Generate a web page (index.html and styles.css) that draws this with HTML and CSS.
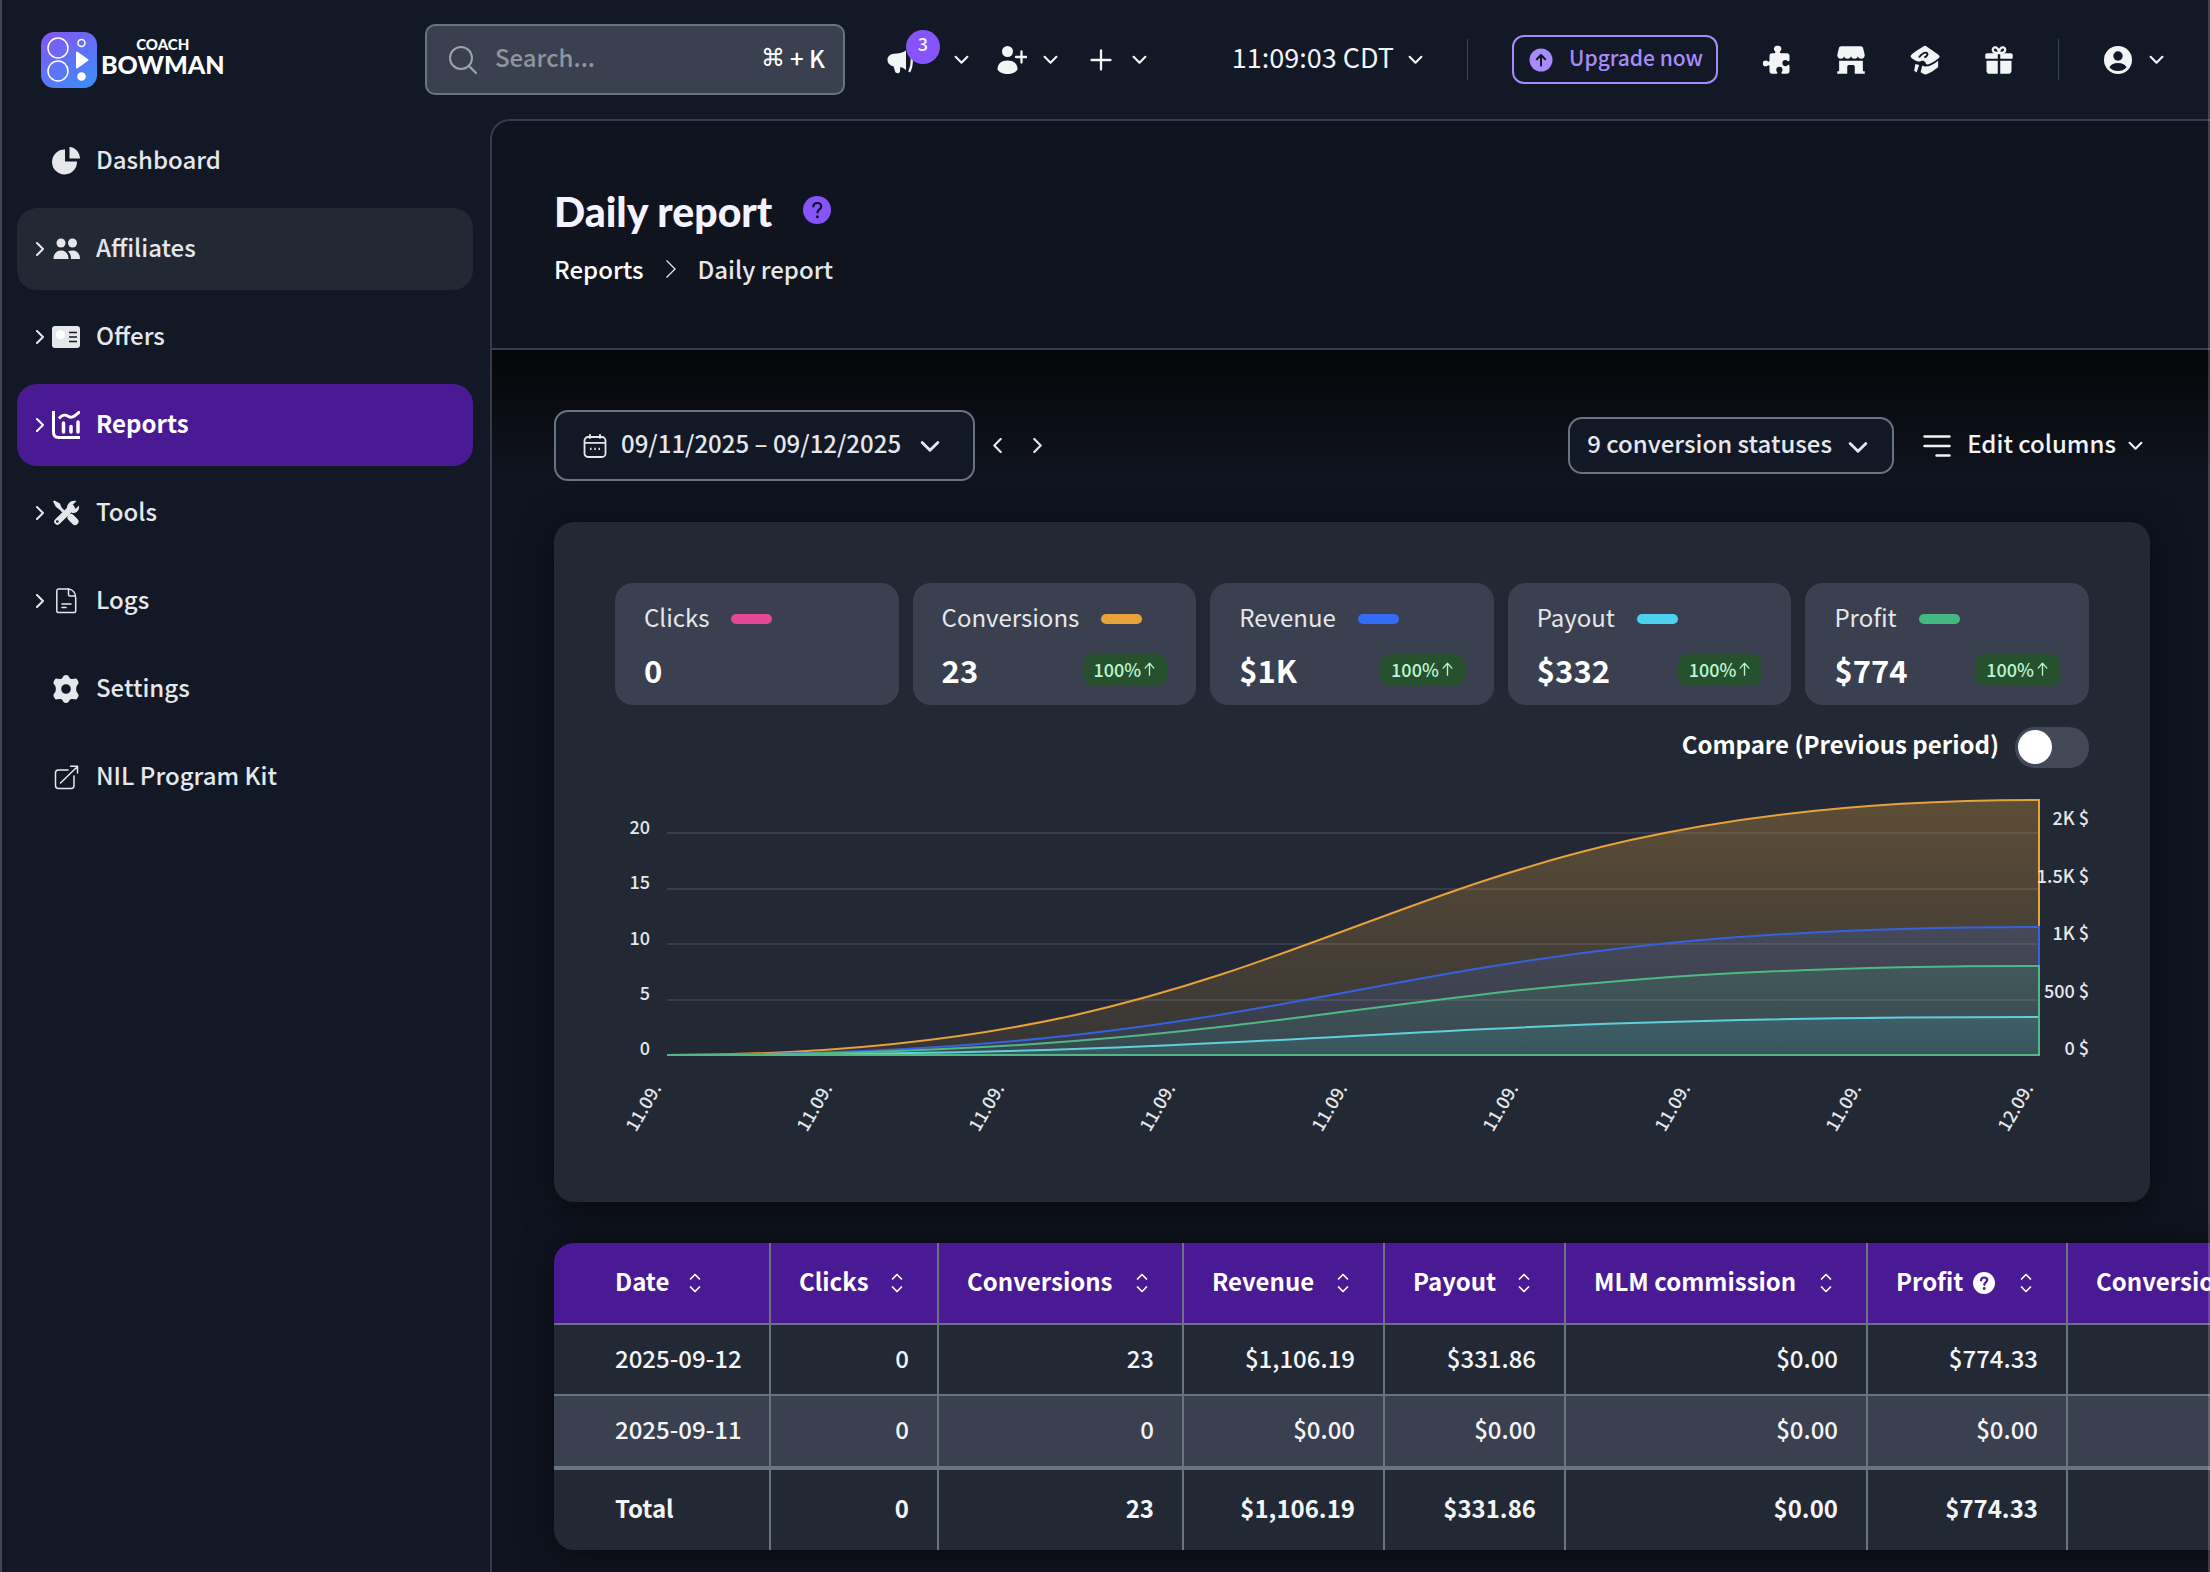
FILE: index.html
```html
<!DOCTYPE html>
<html lang="en">
<head>
<meta charset="UTF-8" />
<meta name="viewport" content="width=device-width, initial-scale=1.0" />
<title>Daily report</title>
<link rel="stylesheet" href="styles.css">
</head>
<body>

<!-- Shared icons -->
<svg class="sprite" aria-hidden="true">
  <symbol id="i-down" viewBox="0 0 14 14"><path d="M1.5 4.5 7 10l5.500-5.500" fill="none" stroke="currentColor" stroke-width="2" stroke-linecap="round" stroke-linejoin="round"/></symbol>
  <symbol id="i-right" viewBox="0 0 14 14"><path d="M4 1l6 6-6 6" fill="none" stroke="currentColor" stroke-width="2" stroke-linecap="round" stroke-linejoin="round"/></symbol>
  <symbol id="i-left" viewBox="0 0 14 14"><path d="M10 1 4 7l6 6" fill="none" stroke="currentColor" stroke-width="2" stroke-linecap="round" stroke-linejoin="round"/></symbol>
  <symbol id="i-sort" viewBox="0 0 24 24"><path d="M7.500 8 12 3.500 16.500 8M7.500 16l4.500 4.500 4.500-4.500" fill="none" stroke="currentColor" stroke-width="1.700" stroke-linecap="round" stroke-linejoin="round"/></symbol>
  <symbol id="i-up" viewBox="0 0 14 16"><path d="M7 15V2M2 7l5-5.500L12 7" fill="none" stroke="currentColor" stroke-width="1.500" stroke-linecap="round" stroke-linejoin="round"/></symbol>
</svg>

<header class="topbar">
  <a class="logo" href="#" aria-label="Coach Bowman">
    <svg class="logo-mark" viewBox="0 0 56 56" aria-hidden="true">
      <defs>
        <linearGradient id="logoFill" x1="0.2" y1="0" x2="0.8" y2="1">
          <stop offset="0" stop-color="#8058f5"/>
          <stop offset="1" stop-color="#3f8cf7"/>
        </linearGradient>
      </defs>
      <rect width="56" height="56" rx="13" fill="url(#logoFill)"/>
      <g fill="none" stroke="#fff" stroke-width="1.500">
        <circle cx="17" cy="16" r="10"/>
        <circle cx="17" cy="39" r="10"/>
        <circle cx="40.500" cy="11" r="3.500"/>
      </g>
      <path d="M36 20.500v15L46.500 28z" fill="#fff" stroke="#fff" stroke-width="2" stroke-linejoin="round"/>
      <circle cx="40.500" cy="44.500" r="4.300" fill="#fff"/>
    </svg>
    <span class="logo-text"><span class="logo-small">COACH</span><span class="logo-big">BOWMAN</span></span>
  </a>

  <label class="search">
    <svg class="icon" viewBox="0 0 28 28" aria-hidden="true"><circle cx="12" cy="12" r="11" fill="none" stroke="currentColor" stroke-width="2"/><path d="m20 20 7 7" stroke="currentColor" stroke-width="2.200" stroke-linecap="round"/></svg>
    <input type="text" placeholder="Search..." aria-label="Search" />
    <kbd><span class="cmd">⌘</span>+ K</kbd>
  </label>

  <div class="tools">
    <button class="tool notify" aria-label="News">
      <svg class="icon" viewBox="0 0 30 30" aria-hidden="true"><path d="M19 5.500C15.500 8 11.500 8.500 7 8.800c-4 .2-6.500 2.900-6.500 6 0 3.500 2.500 6 6 6.400l1.700 5.500c.6 2 4.600 2 4.800-.3l.3-4.300c2.500.6 4.200 1.500 5.700 3.200z" fill="currentColor"/><path d="M22.200 3c3.500 6.500 3.500 17.500 0 24" fill="none" stroke="currentColor" stroke-width="2.200"/></svg>
      <span class="badge">3</span>
      <svg class="chev"><use href="#i-down"/></svg>
    </button>
    <button class="tool" aria-label="Add user">
      <svg class="icon" viewBox="0 0 30 30" aria-hidden="true"><circle cx="10.500" cy="6.500" r="5.500" fill="currentColor"/><path d="M.5 24.500C.5 18.500 4.500 15.500 10.500 15.500s10 3 10 9c-2.500 3.500-6 4.500-10 4.500S3 28 .5 24.500z" fill="currentColor"/><path d="M24.500 6.500v11M19 12h10.500" stroke="currentColor" stroke-width="2.300" stroke-linecap="round"/></svg>
      <svg class="chev"><use href="#i-down"/></svg>
    </button>
    <button class="tool" aria-label="Create">
      <svg class="icon" viewBox="0 0 30 30" aria-hidden="true"><path d="M15 5.500v19M5.500 15h19" stroke="currentColor" stroke-width="2.300" stroke-linecap="round"/></svg>
      <svg class="chev"><use href="#i-down"/></svg>
    </button>
  </div>

  <div class="account">
    <button class="tool clock">11:09:03 CDT <svg class="chev"><use href="#i-down"/></svg></button>
    <span class="divider"></span>
    <button class="upgrade">
      <svg viewBox="0 0 24 24" aria-hidden="true"><circle cx="12" cy="12" r="11.500" fill="currentColor"/><path d="M12 17.500V7.500M7.800 11.300 12 7l4.200 4.300" fill="none" stroke="#121826" stroke-width="2" stroke-linecap="round" stroke-linejoin="round"/></svg>
      Upgrade now
    </button>
    <button class="tool" aria-label="Plugins">
      <svg class="icon" viewBox="0 0 24 24" aria-hidden="true"><path d="M10.700 5.800c0-.6-.5-.9-.8-1.400A2.500 2.500 0 0 1 12.500.6a2.500 2.500 0 0 1 2.600 3.800c-.3.500-.8.800-.8 1.400 0 .5.400.7.800.7h4.900c1.200 0 2 .8 2 2v3.700c0 .5-.3.800-.8.800-.6 0-1-1.100-2.400-1.100a2.500 2.500 0 0 0 0 5c1.400 0 1.800-1.100 2.400-1.100.5 0 .8.300.8.800V21c0 1.200-.8 2-2 2h-3.800c-.5 0-.7-.3-.7-.8 0-.6.900-1 .9-2.300a2.500 2.500 0 0 0-5 0c0 1.300.9 1.700.9 2.300 0 .5-.3.800-.8.800H8c-1.200 0-2-.8-2-2v-4c0-.5-.3-.9-.8-.9-.6 0-1 .9-2.200.9a2.200 2.200 0 0 1 0-4.600c1.200 0 1.600.9 2.200.9.500 0 .8-.4.800-.9V8.500c0-1.200.8-2 2-2h1.900c.5 0 .8-.2.800-.7z" fill="currentColor"/></svg>
    </button>
    <button class="tool" aria-label="Marketplace">
      <svg class="icon" viewBox="0 0 24 24" aria-hidden="true"><path d="M4.200 1h15.600c1 0 1.600.6 1.900 1.500L23 8c0 1.800-1.200 3-2.800 3s-2.700-1-2.700-2.200c0 1.200-1.200 2.200-2.700 2.200S12 10 12 8.800C12 10 10.700 11 9.200 11S6.500 10 6.500 8.800C6.500 10 5.400 11 3.800 11 2.200 11 1 9.800 1 8l1.300-5.500C2.600 1.600 3.200 1 4.200 1z" fill="currentColor"/><path d="M2.500 12.500h19V21H23v2h-8v-5.500c0-1-.8-1.500-1.500-1.500h-3c-.7 0-1.500.5-1.500 1.500V23H1v-2h1.500z" fill="currentColor"/></svg>
    </button>
    <button class="tool" aria-label="Academy">
      <svg class="icon" viewBox="0 0 24 24" aria-hidden="true"><path d="M12 .6c.8 0 10 6.500 11.300 7.800.5.500.5 1.200 0 1.800-1.500 1.500-7 5.300-9.200 5.300-1.600 0-1.500-2-2.800-2.600-1.800-.8-3.300.7-4.800.3C4.500 12.600 1 10.800.6 9.400c-.2-.8 0-1.200.6-1.700C3.200 5.800 11.200.6 12 .6z" fill="currentColor"/><path d="M7.500 9.500c2-2.300 4-4 5.800-3.200 1.600.8.200 2.700-1.300 3.400" fill="none" stroke="#121826" stroke-width="1.500" stroke-linecap="round"/><path d="M22.500 12.500v5c0 .8-8.500 6-10.200 6-.8 0-3.300-1.200-3.800-1.700l1.300-5.500c2.200 1.800 7.700.7 12.700-3.800zM4.300 15.200l3 .800-2 6-2-1.500z" fill="currentColor"/></svg>
    </button>
    <button class="tool" aria-label="Rewards">
      <svg class="icon" viewBox="0 0 24 24" aria-hidden="true"><path d="M11 12.500V23H4.500C3 23 2 22 2 20.500v-8zM13 12.500V23h6.500c1.500 0 2.500-1 2.500-2.500v-8zM2.500 6.500H11V11H2c-.6 0-1-.4-1-1V8c0-.8.600-1.500 1.500-1.500zM13 6.500h8.500c.9 0 1.500.7 1.500 1.500v2c0 .6-.4 1-1 1h-9z" fill="currentColor"/><path d="M12 6.500C10 6.500 7 6 7 3.800 7 1 11.500.8 12 6.500zM12 6.500c2 0 5-.5 5-2.700C17 1 12.500.8 12 6.500z" fill="none" stroke="currentColor" stroke-width="1.800"/></svg>
    </button>
    <span class="divider"></span>
    <button class="tool" aria-label="Account">
      <svg class="icon" viewBox="0 0 30 30" aria-hidden="true"><circle cx="15" cy="15" r="14" fill="currentColor"/><circle cx="15" cy="11" r="4.700" fill="#121826"/><path d="M6.500 22.500c1-3 4-4.500 8.500-4.500s7.500 1.500 8.500 4.500A12 12 0 0 1 15 26a12 12 0 0 1-8.500-3.500z" fill="#121826"/></svg>
      <svg class="chev"><use href="#i-down"/></svg>
    </button>
  </div>
</header>

<div class="layout">
  <nav class="sidebar">
    <a class="nav-item" href="#">
      <span class="arrow"></span>
      <svg class="nav-icon" viewBox="0 0 28 28" aria-hidden="true"><path d="M13 3v12h12A12.500 12.500 0 1 1 13 3z" fill="currentColor" transform="translate(0 -.5)"/><path d="M17.500 0C23.500.5 27.500 5 28 11.500H17.500z" fill="currentColor"/></svg>
      Dashboard
    </a>
    <a class="nav-item hover" href="#">
      <svg class="arrow"><use href="#i-right"/></svg>
      <svg class="nav-icon" viewBox="0 0 28 28" aria-hidden="true"><g fill="currentColor"><circle cx="9" cy="8" r="4.500"/><circle cx="20.500" cy="8" r="4.500"/><path d="M1.500 24c0-5.500 3-8.500 7.500-8.500s7.500 3 7.500 8.500zM16 16.500c1.200-.7 2.700-1 4.500-1 4.500 0 7.500 3 7.500 8.500h-9c.2-3-.8-5.800-3-7.500z"/></g></svg>
      Affiliates
    </a>
    <a class="nav-item" href="#">
      <svg class="arrow"><use href="#i-right"/></svg>
      <svg class="nav-icon" viewBox="0 0 28 28" aria-hidden="true"><rect y="3" width="28" height="22" rx="3" fill="currentColor"/><circle cx="8.500" cy="11.500" r="4.500" fill="#fff"/><path d="M17 9.500h8M17 14h8M17 18.500h8" stroke="#121826" stroke-width="1.500"/></svg>
      Offers
    </a>
    <a class="nav-item active" href="#">
      <svg class="arrow"><use href="#i-right"/></svg>
      <svg class="nav-icon" viewBox="0 0 28 28" aria-hidden="true"><path d="M1.500 0v21c0 3.500 1.500 5.500 5 5.500H28M7 7.500c4-5 7-3.500 9.500-2s5 1 11.500-5" fill="none" stroke="currentColor" stroke-width="3"/><path d="M11.500 12v9M19 15.500V21M26 11v10" fill="none" stroke="currentColor" stroke-width="3.500" stroke-linecap="round"/></svg>
      Reports
    </a>
    <a class="nav-item" href="#">
      <svg class="arrow"><use href="#i-right"/></svg>
      <svg class="nav-icon" viewBox="0 0 28 28" aria-hidden="true"><g fill="none" stroke="currentColor" stroke-linecap="round"><path d="M5.500 22.500 19.500 9" stroke-width="6.500"/><path d="m19 18.500 4 4" stroke-width="7"/><path d="M5 6l6 6" stroke-width="3"/></g><path d="M1 2.500 2.500 1.500 8 4.500l1.500 4L7 10 4 8zM24.500 2 20 6.500l1.500 2.500 2.500.500L27 6.500c.600 3.500-1.500 8-6.500 7.500L15 9.500C14.500 5 19 .5 24.500 2z" fill="currentColor"/><circle cx="5.300" cy="22.500" r="1.300" fill="#121826"/></svg>
      Tools
    </a>
    <a class="nav-item" href="#">
      <svg class="arrow"><use href="#i-right"/></svg>
      <svg class="nav-icon" viewBox="0 0 28 28" aria-hidden="true"><g fill="none" stroke="currentColor" stroke-width="1.500" stroke-linejoin="round" stroke-linecap="round"><path d="M16.500 2H6.500A1.800 1.800 0 0 0 4.800 4v20a1.500 1.500 0 0 0 1.700 1.500h15.500a1.500 1.500 0 0 0 1.700-1.500V11c0-5-3-8.500-7.200-9z"/><path d="M16.500 2v5.500c0 1 .5 1.500 1.500 1.500h5M10 17h9M10 20.500h4"/></g></svg>
      Logs
    </a>
    <a class="nav-item" href="#">
      <span class="arrow"></span>
      <svg class="nav-icon" viewBox="0 0 28 28" aria-hidden="true"><path fill="currentColor" fill-rule="evenodd" d="M14 0c1.500 0 2.600.8 3.200 2.200.5 1.300 1.500 1.800 3.300 1.800l3.500-.5c1 .3 2.500 2.800 2.600 4.300-.1 1.300-1.400 2-1.900 3.200-.7 1.800-.7 4.200 0 6 .5 1.200 1.800 1.900 1.900 3.200-.1 1.500-1.600 4-2.600 4.300l-3.500-.5c-1.800 0-2.800.5-3.300 1.800C16.600 27.200 15.500 28 14 28s-2.600-.8-3.200-2.200C10.300 24.500 9.300 24 7.500 24L4 24.500c-1-.3-2.500-2.800-2.600-4.300.1-1.300 1.400-2 1.900-3.200.7-1.800.7-4.200 0-6-.5-1.200-1.800-1.900-1.900-3.200C1.500 6.300 3 3.800 4 3.500L7.500 4c1.800 0 2.800-.5 3.300-1.800C11.400.8 12.500 0 14 0zM14 9.200a4.800 4.800 0 1 0 0 9.600 4.800 4.800 0 0 0 0-9.600z"/></svg>
      Settings
    </a>
    <a class="nav-item" href="#">
      <span class="arrow"></span>
      <svg class="nav-icon" viewBox="0 0 28 28" aria-hidden="true"><path d="M16 7H6.500A3 3 0 0 0 3.500 10v12.500a3 3 0 0 0 3 3H19a3 3 0 0 0 3-3V13M8.500 20 25.500 3.500M18.500 3.300h7V10" fill="none" stroke="currentColor" stroke-width="1.500" stroke-linecap="round" stroke-linejoin="round"/></svg>
      NIL Program Kit
    </a>
  </nav>

  <main class="main">
    <div class="page-head">
      <div class="title-row">
        <h1>Daily report</h1>
        <svg class="help" viewBox="0 0 28 28" aria-hidden="true"><circle cx="14" cy="14" r="14" fill="#8754fb"/><path d="M10.300 10.500C10.500 8 12 7 14.200 7c2.300 0 4 1.400 4 3.400 0 2.800-3.700 3-3.700 6" fill="none" stroke="#10141f" stroke-width="2.200" stroke-linecap="round"/><circle cx="14.400" cy="20.800" r="1.500" fill="#10141f"/></svg>
      </div>
      <div class="crumbs">
        <a href="#">Reports</a>
        <svg viewBox="0 0 20 20" aria-hidden="true"><path d="M5.500 1.500 14 10l-8.500 8.500" fill="none" stroke="currentColor" stroke-width="1.300"/></svg>
        <span>Daily report</span>
      </div>
    </div>

    <div class="content">
      <div class="filters">
        <button class="date-picker">
          <svg class="cal" viewBox="0 0 24 24" aria-hidden="true"><rect x="1.500" y="3" width="21" height="20" rx="3.500" fill="none" stroke="currentColor" stroke-width="1.800"/><path d="M2 8.800h20M7 .8V4M17 .8V4" stroke="currentColor" stroke-width="1.800" stroke-linecap="round"/><path d="M7 14.800h1.500M11.300 14.800h1.500M15.500 14.800H17" stroke="currentColor" stroke-width="2.200"/></svg>
          09/11/2025 – 09/12/2025
          <svg class="chev-lg"><use href="#i-down"/></svg>
        </button>
        <button class="step" aria-label="Previous"><svg><use href="#i-left"/></svg></button>
        <button class="step" aria-label="Next"><svg><use href="#i-right"/></svg></button>
        <div class="status-select">
          <select aria-label="Conversion statuses"><option>9 conversion statuses</option></select>
          <svg class="chev-lg"><use href="#i-down"/></svg>
        </div>
        <button class="edit-columns">
          <svg class="lines" viewBox="0 0 28 24" aria-hidden="true"><path d="M1.500 2.500h25M1.500 12h25M13.500 21.500h13" stroke="currentColor" stroke-width="2.500" stroke-linecap="round"/></svg>
          Edit columns
          <svg class="chev"><use href="#i-down"/></svg>
        </button>
      </div>

      <section class="card">
        <div class="stats">
          <div class="stat">
            <div class="stat-label">Clicks <span class="pill pink"></span></div>
            <div class="stat-row"><strong>0</strong></div>
          </div>
          <div class="stat">
            <div class="stat-label">Conversions <span class="pill orange"></span></div>
            <div class="stat-row"><strong>23</strong><span class="trend">100%<svg><use href="#i-up"/></svg></span></div>
          </div>
          <div class="stat">
            <div class="stat-label">Revenue <span class="pill blue"></span></div>
            <div class="stat-row"><strong>$1K</strong><span class="trend">100%<svg><use href="#i-up"/></svg></span></div>
          </div>
          <div class="stat">
            <div class="stat-label">Payout <span class="pill cyan"></span></div>
            <div class="stat-row"><strong>$332</strong><span class="trend">100%<svg><use href="#i-up"/></svg></span></div>
          </div>
          <div class="stat">
            <div class="stat-label">Profit <span class="pill green"></span></div>
            <div class="stat-row"><strong>$774</strong><span class="trend">100%<svg><use href="#i-up"/></svg></span></div>
          </div>
        </div>

        <div class="compare">
          <label for="compare">Compare (Previous period)</label>
          <input type="checkbox" class="toggle" id="compare" />
        </div>

        <svg class="chart" viewBox="0 0 1474 362" role="img" aria-label="Daily chart">
          <defs>
            <linearGradient id="gOrange" gradientUnits="userSpaceOnUse" x1="0" y1="20" x2="0" y2="275"><stop offset="0" stop-color="#e8a23a" stop-opacity=".3"/><stop offset="1" stop-color="#e8a23a" stop-opacity=".1"/></linearGradient>
            <linearGradient id="gBlue" gradientUnits="userSpaceOnUse" x1="0" y1="20" x2="0" y2="275"><stop offset="0" stop-color="#336df5" stop-opacity=".25"/><stop offset="1" stop-color="#336df5" stop-opacity=".1"/></linearGradient>
            <linearGradient id="gCyan" gradientUnits="userSpaceOnUse" x1="0" y1="20" x2="0" y2="275"><stop offset="0" stop-color="#4cd2ee" stop-opacity=".3"/><stop offset="1" stop-color="#4cd2ee" stop-opacity=".1"/></linearGradient>
            <linearGradient id="gGreen" gradientUnits="userSpaceOnUse" x1="0" y1="20" x2="0" y2="275"><stop offset="0" stop-color="#45b882" stop-opacity=".3"/><stop offset="1" stop-color="#45b882" stop-opacity=".1"/></linearGradient>
          </defs>
          <g class="grid">
            <path d="M52 53H1424M52 109H1424M52 164H1424M52 220H1424M52 275H1424"/>
          </g>
          <g class="series">
            <path fill="url(#gOrange)" stroke="#e8a23a" d="M52 275C738 275 738 20 1424 20V275Z"/>
            <path fill="url(#gBlue)" stroke="#3562e0" d="M52 275C738 275 738 147 1424 147V275Z"/>
            <path fill="url(#gCyan)" stroke="#63d3e6" d="M52 275C738 275 738 237 1424 237V275Z"/>
            <path fill="url(#gGreen)" stroke="#4fb884" d="M52 275C738 275 738 186 1424 186V275Z"/>
          </g>
          <g class="axis">
            <text x="35" y="54">20</text>
            <text x="35" y="109">15</text>
            <text x="35" y="165">10</text>
            <text x="35" y="220">5</text>
            <text x="35" y="275">0</text>
            <text x="1474" y="45">2K $</text>
            <text x="1474" y="103">1.5K $</text>
            <text x="1474" y="160">1K $</text>
            <text x="1474" y="218">500 $</text>
            <text x="1474" y="275">0 $</text>
          </g>
          <g class="axis">
            <text transform="translate(47 308) rotate(-60)">11.09.</text>
            <text transform="translate(218 308) rotate(-60)">11.09.</text>
            <text transform="translate(390 308) rotate(-60)">11.09.</text>
            <text transform="translate(561 308) rotate(-60)">11.09.</text>
            <text transform="translate(733 308) rotate(-60)">11.09.</text>
            <text transform="translate(904 308) rotate(-60)">11.09.</text>
            <text transform="translate(1076 308) rotate(-60)">11.09.</text>
            <text transform="translate(1247 308) rotate(-60)">11.09.</text>
            <text transform="translate(1419 308) rotate(-60)">12.09.</text>
          </g>
        </svg>
      </section>

      <table class="report">
        <thead>
          <tr>
            <th class="c-date"><span>Date <svg><use href="#i-sort"/></svg></span></th>
            <th class="c-clicks"><span>Clicks <svg><use href="#i-sort"/></svg></span></th>
            <th class="c-conv"><span>Conversions <svg><use href="#i-sort"/></svg></span></th>
            <th class="c-rev"><span>Revenue <svg><use href="#i-sort"/></svg></span></th>
            <th class="c-pay"><span>Payout <svg><use href="#i-sort"/></svg></span></th>
            <th class="c-mlm"><span>MLM commission <svg><use href="#i-sort"/></svg></span></th>
            <th class="c-profit"><span><span class="with-help">Profit <svg viewBox="0 0 22 22" aria-hidden="true"><circle cx="11" cy="11" r="11" fill="#fff"/><path d="M8 8.300C8.200 6.500 9.400 5.500 11.100 5.500c1.800 0 3.100 1 3.100 2.600 0 2.200-2.900 2.400-2.900 4.700" fill="none" stroke="#491a94" stroke-width="2.200" stroke-linecap="round"/><circle cx="11.200" cy="16.500" r="1.400" fill="#491a94"/></svg></span> <svg><use href="#i-sort"/></svg></span></th>
            <th class="c-rate"><span>Conversion rate <svg><use href="#i-sort"/></svg></span></th>
          </tr>
        </thead>
        <tbody>
          <tr><td>2025-09-12</td><td>0</td><td>23</td><td>$1,106.19</td><td>$331.86</td><td>$0.00</td><td>$774.33</td><td></td></tr>
          <tr><td>2025-09-11</td><td>0</td><td>0</td><td>$0.00</td><td>$0.00</td><td>$0.00</td><td>$0.00</td><td></td></tr>
        </tbody>
        <tfoot>
          <tr><td>Total</td><td>0</td><td>23</td><td>$1,106.19</td><td>$331.86</td><td>$0.00</td><td>$774.33</td><td></td></tr>
        </tfoot>
      </table>
    </div>
  </main>
</div>

</body>
</html>
```

FILE: styles.css
```css
* {
  box-sizing: border-box;
}
body {
  margin: 0;
  min-height: 100vh;
  display: flex;
  flex-direction: column;
  overflow: hidden;
  background: #121826;
  color: #e5e7eb;
  font-family: "Noto Sans CJK SC", "Noto Sans", sans-serif;
  font-size: 24px;
  font-weight: 500;
  line-height: 36px;
}
/* thin window frame on both sides */
body::after {
  content: "";
  position: fixed;
  inset: 0;
  border: solid rgba(255, 255, 255, 0.2);
  border-width: 0 2px;
  pointer-events: none;
}
a {
  color: inherit;
  text-decoration: none;
}
button, input, select {
  font: inherit;
  color: inherit;
}
button {
  display: flex;
  align-items: center;
  padding: 0;
  border: none;
  background: none;
  white-space: nowrap;
  cursor: pointer;
}
svg {
  display: block;
  flex-shrink: 0;
}
.sprite {
  position: absolute;
  width: 0;
  height: 0;
}

/* top bar */
.topbar {
  display: flex;
  align-items: center;
  height: 119px;
  padding: 0 46px 0 41px;
  color: #f3f4f6;
}
.logo {
  display: flex;
  align-items: center;
  gap: 4px;
  width: 384px;
}
.logo-mark {
  width: 56px;
  height: 56px;
}
.logo-text {
  display: flex;
  flex-direction: column;
  align-items: center;
  padding-bottom: 6px;
  color: #fff;
  font-family: Lato, sans-serif;
  font-weight: 900;
}
.logo-small {
  font-size: 15px;
  line-height: 15px;
}
.logo-big {
  font-size: 25px;
  line-height: 24px;
}
.search {
  display: flex;
  align-items: center;
  gap: 18px;
  width: 420px;
  height: 71px;
  padding: 0 18px 0 22px;
  border: 2px solid #6b7280;
  border-radius: 10px;
  background: #3b4050;
  color: #9ca3af;
}
.search svg {
  width: 28px;
  height: 28px;
}
.search input {
  flex: 1;
  min-width: 0;
  padding: 0 0 6px;
  border: none;
  outline: none;
  background: none;
}
.search input::placeholder {
  color: #8f959e;
}
.search kbd {
  display: flex;
  align-items: center;
  gap: 5px;
  padding-bottom: 4px;
  font: inherit;
  color: #fff;
}
.cmd {
  font-family: "DejaVu Sans", sans-serif;
}
.tools {
  display: flex;
  gap: 28px;
  margin-left: 42px;
}
.tool {
  position: relative;
  gap: 16px;
}
.icon {
  width: 30px;
  height: 30px;
}
.chev {
  width: 15px;
  height: 15px;
}
.notify {
  gap: 37px;
}
.badge {
  position: absolute;
  left: 19px;
  top: -15px;
  width: 34px;
  height: 34px;
  border-radius: 50%;
  background: #8754fb;
  font-size: 18px;
  line-height: 26px;
  text-align: center;
}
.account {
  display: flex;
  align-items: center;
  gap: 44px;
  margin-left: auto;
}
.clock {
  gap: 14px;
  padding-bottom: 6px;
  font-size: 27px;
  font-weight: 400;
}
.clock svg {
  margin-top: 6px;
}
.divider {
  width: 1px;
  height: 41px;
  background: #374151;
}
.upgrade {
  gap: 16px;
  height: 49px;
  padding: 0 13px 6px 15px;
  border: 2px solid #a78bfa;
  border-radius: 12px;
  color: #a78bfa;
  font-size: 21px;
}
.upgrade svg {
  width: 24px;
  height: 24px;
  margin-top: 6px;
}

/* sidebar */
.layout {
  display: flex;
  flex: 1;
}
.sidebar {
  display: flex;
  flex-direction: column;
  gap: 6px;
  width: 490px;
  padding: 1px 17px 0;
  flex-shrink: 0;
}
.nav-item {
  display: flex;
  align-items: center;
  height: 82px;
  padding: 0 16px 4px;
  border-radius: 20px;
}
.nav-item svg {
  margin-top: 4px;
}
.nav-item .arrow {
  width: 14px;
  height: 14px;
  margin-right: 5px;
}
.nav-icon {
  width: 28px;
  height: 28px;
  margin-right: 16px;
}
.nav-item.hover {
  background: #222935;
}
.nav-item.active {
  background: #491a94;
  color: #fff;
  font-weight: 700;
}

/* main panel */
.main {
  flex: 1;
  min-width: 0;
  overflow: hidden;
  border: solid #363c4b;
  border-width: 2px 0 0 2px;
  border-top-left-radius: 20px;
  background: #10141f;
}
.page-head {
  padding: 68px 62px 61px;
  border-bottom: 2px solid #363c4b;
}
.title-row {
  display: flex;
  align-items: center;
  gap: 31px;
}
h1 {
  margin: 0;
  color: #f5f3ff;
  font-family: Lato, sans-serif;
  font-size: 41px;
  font-weight: 900;
  line-height: 46px;
}
.help {
  width: 28px;
  height: 28px;
  margin-bottom: 4px;
}
.crumbs {
  display: flex;
  align-items: center;
  gap: 17px;
  margin-top: 16px;
}
.crumbs a {
  color: #fff;
}
.crumbs svg {
  width: 20px;
  height: 20px;
}
.content {
  padding: 60px 60px 22px 62px;
  background: linear-gradient(#050608, #10141f 130px);
}
.filters {
  display: flex;
  align-items: center;
  margin-bottom: 41px;
}
.date-picker {
  gap: 14px;
  height: 71px;
  margin-right: 10px;
  padding: 0 33px 6px 27px;
  border: 2px solid #6b7280;
  border-radius: 14px;
  background: #121826;
}
.date-picker svg {
  margin-top: 6px;
}
.cal {
  width: 24px;
  height: 24px;
}
.chev-lg {
  width: 20px;
  height: 20px;
}
.date-picker .chev-lg {
  margin-left: 5px;
}
.step {
  padding: 0 5px;
}
.step + .step {
  margin-left: 15px;
}
.step svg {
  width: 15px;
  height: 15px;
}
.status-select {
  position: relative;
  margin-left: auto;
}
.status-select select {
  appearance: none;
  height: 57px;
  padding: 0 60px 6px 17px;
  border: 2px solid #6b7280;
  border-radius: 14px;
  background: #121826;
}
.status-select svg {
  position: absolute;
  right: 26px;
  top: 20px;
  pointer-events: none;
}
.edit-columns {
  gap: 16px;
  margin: 0 7px 0 29px;
  padding-bottom: 6px;
  color: #f3f4f6;
}
.edit-columns svg {
  margin-top: 6px;
}
.edit-columns .chev {
  margin-left: -4px;
}
.lines {
  width: 28px;
  height: 24px;
}

/* chart card */
.card {
  padding: 61px;
  padding-bottom: 60px;
  border-radius: 20px;
  background: #222935;
  box-shadow: 0 4px 36px rgba(0, 0, 0, 0.55);
}
.stats {
  display: grid;
  grid-template-columns: repeat(5, 1fr);
  gap: 14px;
}
.stat {
  height: 122px;
  padding: 16px 29px;
  border-radius: 18px;
  background: #3b4050;
}
.stat-label {
  display: flex;
  align-items: center;
  gap: 22px;
  font-weight: 400;
}
.pill {
  width: 41px;
  height: 10px;
  margin-top: 4px;
  border-radius: 5px;
}
.pink { background: #e44796; }
.orange { background: #e8a23a; }
.blue { background: #336df5; }
.cyan { background: #4cd2ee; }
.green { background: #45b882; }
.stat-row {
  display: flex;
  align-items: center;
  justify-content: space-between;
  margin-top: 17px;
}
.stat-row strong {
  color: #fff;
  font-size: 31px;
}
.trend {
  display: flex;
  align-items: center;
  gap: 2px;
  height: 32px;
  padding: 0 11px 2px;
  border-radius: 10px;
  background: #27502f;
  color: #bbf7d0;
  font-size: 18px;
}
.trend svg {
  width: 13px;
  height: 14px;
}
.compare {
  display: flex;
  align-items: center;
  justify-content: flex-end;
  gap: 16px;
  margin-top: 21px;
  color: #fff;
  font-weight: 700;
}
.compare label {
  padding-bottom: 6px;
}
.toggle {
  appearance: none;
  width: 74px;
  height: 41px;
  margin: 0;
  padding: 3px;
  border-radius: 20px;
  background: #424855;
}
.toggle::before {
  content: "";
  display: block;
  width: 34px;
  height: 34px;
  border-radius: 50%;
  background: #fff;
}
.toggle:checked::before {
  margin-left: auto;
}
.chart {
  width: 100%;
  height: auto;
  margin-top: 12px;
}
.grid path {
  fill: none;
  stroke: #373d4a;
  stroke-width: 2;
}
.series path {
  stroke-width: 2;
}
.axis text {
  fill: #e5e7eb;
  font-size: 18px;
  text-anchor: end;
}

/* report table */
.report {
  table-layout: fixed;
  width: 1880px;
  margin-top: 41px;
  border-collapse: separate;
  border-spacing: 0;
  border-radius: 20px;
  overflow: hidden;
  background: #222935;
  box-shadow: 0 4px 36px rgba(0, 0, 0, 0.55);
  color: #f3f4f6;
}
.report th,
.report td {
  padding: 0 28px;
  border: solid #6b7280;
  border-width: 0 2px 2px 0;
  text-align: right;
  white-space: nowrap;
}
.report th {
  height: 82px;
  background: #491a94;
  color: #fff;
}
.report th > span {
  display: flex;
  align-items: center;
  justify-content: space-between;
  padding-bottom: 4px;
}
.report th svg {
  width: 24px;
  height: 24px;
  margin-top: 4px;
}
.report .with-help {
  display: flex;
  align-items: center;
  gap: 10px;
}
.report .with-help svg {
  width: 22px;
  height: 22px;
}
.report td {
  height: 71px;
  padding-bottom: 4px;
}
.report th:first-child,
.report td:first-child {
  padding-left: 61px;
  text-align: left;
}
.report tbody tr:nth-child(2) td {
  height: 74px;
  border-bottom-width: 4px;
  background: #3b4050;
}
.report tfoot td {
  height: 80px;
  border-bottom: none;
  font-weight: 700;
}
.report .c-date {
  width: 217px;
}
.report .c-date > span {
  justify-content: flex-start;
  gap: 14px;
}
.c-clicks { width: 168px; }
.c-conv { width: 245px; }
.c-rev { width: 201px; }
.c-pay { width: 181px; }
.c-mlm { width: 302px; }
.c-profit { width: 200px; }
```
